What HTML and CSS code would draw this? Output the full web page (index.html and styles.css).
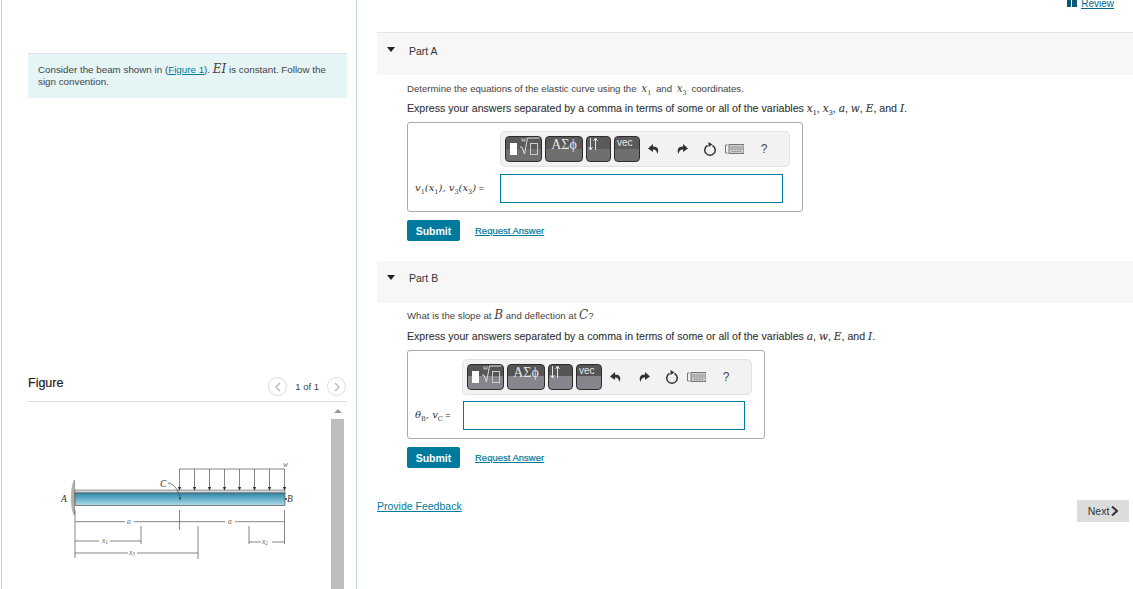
FILE: index.html
```html
<!DOCTYPE html>
<html lang="en">
<head>
<meta charset="utf-8">
<title>Beam problem</title>
<link rel="stylesheet" href="styles.css">
</head>
<body>
<svg class="defs" width="0" height="0" aria-hidden="true">
  <symbol id="i-radical" viewBox="0 0 37 26">
    <rect x="5" y="7" width="7" height="12" fill="#fff"/>
    <path d="M15 11h2l2.500 7 3-16h12" fill="none" stroke="#ddd" stroke-width="1"/>
    <path d="M17 2v3h3V2M17 4h3" fill="none" stroke="#ccc" stroke-width=".8"/>
    <rect x="25.500" y="7.500" width="7" height="11" fill="none" stroke="#ccc" stroke-width="1"/>
  </symbol>
  <symbol id="i-updown" viewBox="0 0 25 26">
    <path d="M4.500 2v12M2.500 11l2 3 2-3M9.500 14V2M7.500 5l2-3 2 3" fill="none" stroke="#e4e4e4" stroke-width="1"/>
  </symbol>
  <symbol id="i-undo" viewBox="0 0 12 12">
    <path d="M5 1 0 5.500 5 9V6.500c2.500 0 3.700 1 4.300 4.500C11.500 7 10 3.500 5 3.500z" fill="#333"/>
  </symbol>
  <symbol id="i-redo" viewBox="0 0 12 12">
    <path d="M7 1l5 4.500L7 9V6.500c-2.500 0-3.700 1-4.300 4.500C.5 7 2 3.500 7 3.500z" fill="#333"/>
  </symbol>
  <symbol id="i-reset" viewBox="0 0 14 14">
    <path d="M4.500 3.500a5.200 5.200 0 1 0 5 0" fill="none" stroke="#333" stroke-width="1.500"/>
    <path d="M5.500 0 9.500 2.500 5.500 5z" fill="#333"/>
  </symbol>
  <symbol id="i-kbd" viewBox="0 0 19 10">
    <path d="M2.500 1H.5v8h2" fill="none" stroke="#777" stroke-width="1"/>
    <rect x="4" y=".5" width="15" height="9" fill="#ccc" stroke="#777" stroke-width="1"/>
    <path d="M5.500 3h12M5.500 5h12M7 7.300h9" stroke="#777" stroke-width="1" stroke-dasharray="1 .6"/>
  </symbol>
</svg>

<div class="page">
  <aside class="left">
    <div class="intro">Consider the beam shown in (<a class="link" href="#fig">Figure 1</a>). <span class="m big">EI</span> is constant. Follow the sign convention.</div>
    <div class="fig-head" id="fig">
      <h2 class="fig-title">Figure</h2>
      <div class="pager">
        <span class="pager-btn">
          <svg width="6" height="10" viewBox="0 0 6 10"><path d="M5 1 1 5l4 4" fill="none" stroke="#bbb" stroke-width="1.500"/></svg>
        </span>
        <span class="pager-text">1 of 1</span>
        <span class="pager-btn">
          <svg width="6" height="10" viewBox="0 0 6 10"><path d="M1 1l4 4-4 4" fill="none" stroke="#bbb" stroke-width="1.500"/></svg>
        </span>
      </div>
    </div>
    <div class="fig-view">
      <svg class="beam" width="303" height="187" viewBox="28 402 303 187">
        <defs>
          <linearGradient id="bar" x1="0" y1="0" x2="0" y2="1">
            <stop offset="0" stop-color="#2f87a8"/>
            <stop offset=".55" stop-color="#6fb7cf"/>
            <stop offset="1" stop-color="#b5dbe6"/>
          </linearGradient>
        </defs>
        <path d="M74 480C70 486 70 510 74 515z" fill="#b9b2a2"/>
        <path d="M74.500 480v35" stroke="#999" stroke-width="1"/>
        <rect x="75" y="490" width="210" height="3" fill="#cfd6d9" stroke="#666" stroke-width=".6"/>
        <rect x="75" y="493" width="210" height="12.500" fill="url(#bar)" stroke="#555" stroke-width=".7"/>
        <g class="ln">
          <path d="M179.500 469H284.700"/>
          <path d="M179.500 469v21M194.500 469v21M209.500 469v21M224.500 469v21M239.500 469v21M254.500 469v21M269.500 469v21M284.500 469v21"/>
        </g>
        <g fill="#333">
          <path d="M177.800 487h3.400l-1.700 3.500zM192.800 487h3.400l-1.700 3.500zM207.800 487h3.400l-1.700 3.500zM222.800 487h3.400l-1.700 3.500zM237.800 487h3.400l-1.700 3.500zM252.800 487h3.400l-1.700 3.500zM267.800 487h3.400l-1.700 3.500zM282.800 487h3.400l-1.700 3.500z"/>
          <circle cx="180" cy="498.500" r="1"/>
          <circle cx="286" cy="499" r="1"/>
        </g>
        <path d="M168 483c6 1 10 6 12 15" fill="none" stroke="#444" stroke-width=".7"/>
        <g class="ln">
          <path d="M75 510v24M75 534v24M179.500 510v20M284.500 510v34"/>
          <path d="M75 521.700h50M134 521.700h45.500M180 521.700h45M235 521.700h49"/>
          <path d="M75 541h24M110 541h31M141 526v18"/>
          <path d="M75 553h53M137 553h61M198 526v33"/>
          <path d="M249 526v18M249 542h12M272 542h12"/>
        </g>
        <text class="lbl" x="61" y="502">A</text>
        <text class="lbl" x="287" y="502">B</text>
        <text class="lbl" x="160" y="487">C</text>
        <text class="lbl sm" x="283" y="467">w</text>
        <text class="lbl sm" x="127" y="524">a</text>
        <text class="lbl sm" x="228" y="524">a</text>
        <text class="lbl sm" x="102" y="543">x<tspan class="sub" dy="1">1</tspan></text>
        <text class="lbl sm" x="129" y="555">x<tspan class="sub" dy="1">3</tspan></text>
        <text class="lbl sm" x="262" y="544">x<tspan class="sub" dy="1">2</tspan></text>
      </svg>
      <div class="scrollbar">
        <span class="scroll-up"></span>
        <span class="scroll-thumb"></span>
      </div>
    </div>
  </aside>

  <main class="right">
    <div class="topbar">
      <a class="review" href="#review"><span class="review-icon"></span><span class="review-text">Review</span></a>
    </div>

    <section class="part">
      <h3 class="part-head"><span class="caret"></span>Part A</h3>
      <div class="part-body">
        <p class="prompt">Determine the equations of the elastic curve using the <span class="m">x<sub>1</sub></span> and <span class="m">x<sub>3</sub></span> coordinates.</p>
        <p class="instr">Express your answers separated by a comma in terms of some or all of the variables <span class="m">x<sub>1</sub></span>, <span class="m">x<sub>3</sub></span>, <span class="m">a</span>, <span class="m">w</span>, <span class="m">E</span>, and <span class="m">I</span>.</p>
        <div class="answer answer-a">
          <div class="toolbar">
            <span class="tb tb-1"><svg width="37" height="26"><use href="#i-radical"/></svg></span>
            <span class="tb tb-2">ΑΣϕ</span>
            <span class="tb tb-3"><svg width="25" height="26"><use href="#i-updown"/></svg></span>
            <span class="tb tb-4">vec</span>
            <span class="tool"><svg width="12" height="12"><use href="#i-undo"/></svg></span>
            <span class="tool"><svg width="12" height="12"><use href="#i-redo"/></svg></span>
            <span class="tool tool-r"><svg width="14" height="14"><use href="#i-reset"/></svg></span>
            <span class="tool tool-k"><svg width="19" height="10"><use href="#i-kbd"/></svg></span>
            <span class="tool tool-q">?</span>
          </div>
          <div class="eq">
            <span class="eq-label"><span class="m">v<sub>1</sub>(x<sub>1</sub>), v<sub>3</sub>(x<sub>3</sub>)</span> =</span>
            <input class="eq-input" type="text" aria-label="answer A">
          </div>
        </div>
        <div class="actions">
          <button class="submit" type="button">Submit</button>
          <a class="req" href="#a">Request Answer</a>
        </div>
      </div>
    </section>

    <section class="part part-b">
      <h3 class="part-head"><span class="caret"></span>Part B</h3>
      <div class="part-body">
        <p class="prompt">What is the slope at <span class="m big">B</span> and deflection at <span class="m big">C</span>?</p>
        <p class="instr">Express your answers separated by a comma in terms of some or all of the variables <span class="m">a</span>, <span class="m">w</span>, <span class="m">E</span>, and <span class="m">I</span>.</p>
        <div class="answer answer-b">
          <div class="toolbar">
            <span class="tb tb-1"><svg width="37" height="26"><use href="#i-radical"/></svg></span>
            <span class="tb tb-2">ΑΣϕ</span>
            <span class="tb tb-3"><svg width="25" height="26"><use href="#i-updown"/></svg></span>
            <span class="tb tb-4">vec</span>
            <span class="tool"><svg width="12" height="12"><use href="#i-undo"/></svg></span>
            <span class="tool"><svg width="12" height="12"><use href="#i-redo"/></svg></span>
            <span class="tool tool-r"><svg width="14" height="14"><use href="#i-reset"/></svg></span>
            <span class="tool tool-k"><svg width="19" height="10"><use href="#i-kbd"/></svg></span>
            <span class="tool tool-q">?</span>
          </div>
          <div class="eq">
            <span class="eq-label"><span class="m">θ<sub>B</sub>, v<sub>C</sub></span> =</span>
            <input class="eq-input" type="text" aria-label="answer B">
          </div>
        </div>
        <div class="actions">
          <button class="submit" type="button">Submit</button>
          <a class="req" href="#b">Request Answer</a>
        </div>
      </div>
    </section>

    <div class="foot">
      <a class="feedback" href="#f">Provide Feedback</a>
      <button class="next" type="button">Next<svg width="7" height="10" viewBox="0 0 7 10"><path d="M1 .500 6 5l-5 4.500" fill="none" stroke="#333" stroke-width="2"/></svg></button>
    </div>
  </main>
</div>
</body>
</html>
```
FILE: styles.css
```css
* { box-sizing: border-box; }
html, body { margin: 0; height: 589px; overflow: hidden; background: #fff; }
body { font-family: "Liberation Sans", Arial, sans-serif; color: #333; font-size: 9.500px; }
.defs { position: absolute; }
a { color: #007a9c; }

.page { display: flex; height: 589px; padding-left: 1px; }

.left { width: 356px; height: 589px; border-left: 1px solid #c9ced2; border-right: 1px solid #c3d3e2; padding: 53px 9px 0 26px; flex: none; }
.intro { height: 45px; background: #e5f5f6; border-top: 1px solid #dde3e6; padding: 10px 10px 0; font-size: 9.800px; line-height: 12px; color: #444; }
.link { color: #007a9c; text-decoration: underline; }
.m { font-family: "DejaVu Serif", serif; font-style: italic; font-size: 10.500px; line-height: 0; }
.m sub { font-size: 6.500px; font-style: normal; line-height: 0; }
.big { font-size: 12px; }

.fig-head { display: flex; justify-content: space-between; align-items: flex-start; height: 32px; margin-top: 272px; border-bottom: 1px solid #dcdcdc; padding-top: 6px; }
.fig-title { margin: 0; font-size: 12.500px; font-weight: normal; color: #222; -webkit-text-stroke: .2px #222; }
.pager { display: flex; align-items: center; gap: 8px; margin-right: 1px; margin-top: 1px; }
.pager-btn { width: 19px; height: 19px; border: 1px solid #ddd; border-radius: 50%; display: flex; align-items: center; justify-content: center; }
.pager-text { font-size: 9.500px; color: #444; }

.fig-view { display: flex; height: 187px; }
.beam { flex: none; display: block; }
.ln path { fill: none; stroke: #666; stroke-width: .8; }
.lbl { font-family: "Liberation Serif", serif; font-style: italic; font-size: 9.500px; fill: #333; }
.sm { font-size: 7.500px; fill: #666; }
.sub { font-size: 5.500px; }
.scrollbar { width: 13px; height: 187px; display: flex; flex-direction: column; align-items: center; }
.scroll-up { height: 17px; width: 13px; flex: none; position: relative; }
.scroll-up::after { content: ""; position: absolute; left: 3px; top: 7px; border-left: 4px solid transparent; border-right: 4px solid transparent; border-bottom: 4px solid #999; }
.scroll-thumb { flex: 1; width: 13px; background: #bdbdbd; }

.right { flex: 1; min-width: 0; margin-left: 20px; }
.topbar { height: 32px; display: flex; justify-content: flex-end; padding-right: 19px; }
.review { display: flex; align-items: flex-start; height: 9px; color: #006a8c; font-size: 10px; line-height: 8px; }
.review-icon { width: 10px; height: 7px; margin-right: 4px; background: linear-gradient(90deg, #035a78 45%, #fff 45%, #fff 55%, #035a78 55%); }
.review-text { border-bottom: 1px solid #006a8c; height: 9px; }

.part-head { display: flex; align-items: center; margin: 0; height: 43px; background: #f7f7f7; border-top: 1px solid #e4e4e4; padding: 0 0 6px 32px; font-size: 10.500px; font-weight: normal; color: #333; position: relative; }
.part-b .part-head { border-top: 0; height: 42px; padding-bottom: 8px; }
.caret { position: absolute; left: 10px; top: 14px; border-left: 4.500px solid transparent; border-right: 4.500px solid transparent; border-top: 5px solid #222; }
.part-body { padding-left: 30px; }
.prompt { margin: 7px 0 0; height: 14px; line-height: 14px; font-size: 9.650px; color: #444; }
.prompt .m { margin: 0 2px; }
.part-b .prompt { margin-top: 6px; }
.part-b .prompt .m { margin: 0; }
.instr { margin: 5px 0 0; height: 14px; line-height: 14px; font-size: 10.600px; color: #333; white-space: nowrap; -webkit-text-stroke: .1px #333; }
.part-b .instr { margin-top: 6px; }
.answer { margin-top: 7px; height: 90px; border: 1px solid #aaa; border-radius: 3px; padding-top: 8px; }
.answer-a { width: 396px; }
.answer-b { width: 358px; height: 89px; }
.answer-a .toolbar { margin-left: 92px; }
.answer-b .toolbar { margin-left: 54px; }
.toolbar { display: flex; align-items: center; width: 290px; height: 36px; background: #f2f2f2; border: 1px solid #e2e2e2; border-radius: 5px; padding: 0 0 0 4px; }
.tb { flex: none; display: block; height: 26px; border: 1px solid #2c2c2c; border-radius: 4px; background: linear-gradient(#5a5a5a 0, #5a5a5a 50%, #6f6f6f 50%, #6f6f6f 100%); color: #e8e8e8; margin-right: 3px; overflow: hidden; }
.answer-b .tb { background: linear-gradient(#555 0, #555 45%, #85858b 45%, #85858b 100%); }
.tb svg { display: block; margin: -1px; }
.tb-1 { width: 37px; }
.tb-2 { width: 38px; text-align: center; font-family: "Liberation Serif", serif; font-size: 14px; line-height: 15px; }
.tb-3 { width: 25px; }
.tb-4 { width: 26px; margin-right: 0; font-size: 10px; line-height: 12px; padding-left: 2px; }
.tool { flex: none; width: 28px; display: flex; justify-content: center; align-items: center; height: 16px; color: #444; }
.tool-r { width: 27px; }
.tool-k { width: 22px; }
.tool-q { width: 38px; font-size: 12px; }
.tool svg { display: block; }

.eq { display: flex; align-items: center; margin-top: 6px; height: 30px; }
.answer-b .eq { margin-top: 5px; }
.answer-a .eq { padding-left: 7px; }
.answer-b .eq { padding-left: 7px; }
.eq-label { flex: none; white-space: nowrap; font-size: 9px; color: #333; }
.answer-a .eq-label { width: 85px; }
.answer-b .eq-label { width: 48px; }
.answer .m { font-size: 10px; }
.answer .m sub { font-size: 6.500px; }
.eq-input { display: block; height: 29px; border: 1px solid #007a9c; background: #fff; padding: 0; border-radius: 0; outline: 0; }
.answer-a .eq-input { width: 283px; }
.answer-b .eq-input { width: 282px; }

.actions { display: flex; align-items: center; margin-top: 8px; }
.submit { width: 53px; height: 21px; padding: 0; border: 0; border-radius: 2px; background: #007a9c; color: #fff; font: bold 10.500px "Liberation Sans", Arial, sans-serif; }
.req { margin-left: 15px; font-size: 9.500px; -webkit-text-stroke: .2px #007a9c; }
.part-b { margin-top: 20px; }

.foot { display: flex; justify-content: space-between; align-items: flex-start; margin-top: 32px; padding-right: 4px; }
.feedback { font-size: 10.500px; }
.next { display: flex; align-items: center; justify-content: center; gap: 2px; width: 52px; height: 22px; padding: 0; border: 0; background: #dcdcdc; color: #333; font: 10.500px "Liberation Sans", Arial, sans-serif; }
```
